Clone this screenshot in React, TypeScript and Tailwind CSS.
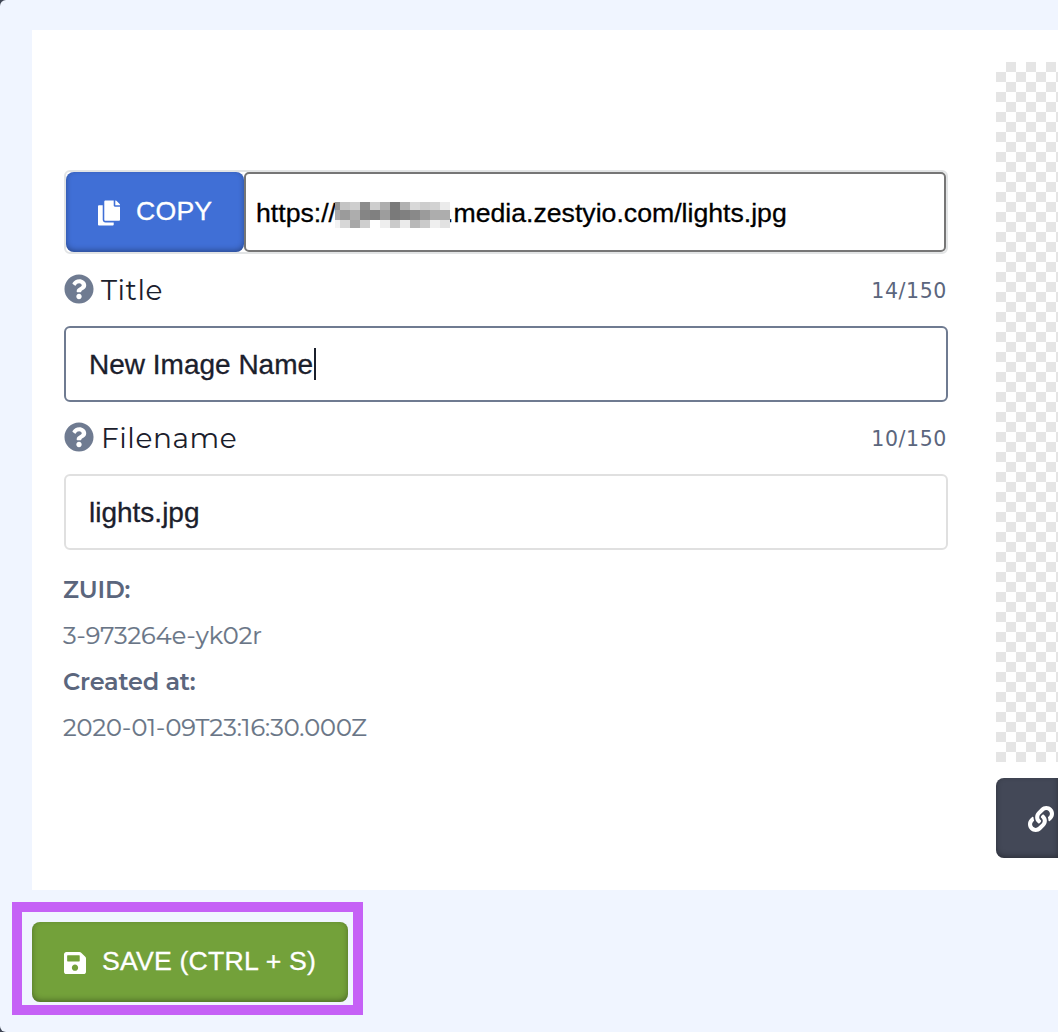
import type { ReactNode } from "react";
import { FaCopy, FaLink, FaQuestionCircle, FaSave } from "react-icons/fa";

const mosaic: string[][] = [
  ["#949494", "#c4c4c4", "#cecece", "#8c8c8c", "#cdcdcd", "#adadad", "#7a7a7a", "#b1b1b1", "#d8d8d8", "#cdcdcd", "#d2d2d2", "#ebebeb"],
  ["#aaaaaa", "#9b9b9b", "#adadad", "#858585", "#808080", "#9d9d9d", "#7a7a7a", "#808080", "#898989", "#9b9b9b", "#adadad", "#adadad"],
  ["#f3f3f3", "#d7d7d7", "#a7a7a7", "#cecece", "#ffffff", "#eeeeee", "#cacaca", "#ebebeb", "#b8b8b8", "#cacaca", "#efefef", "#e2e2e2"],
];

function RedactedHost() {
  return (
    <span className="z-10 -ml-px mt-[6px] grid h-[26px] w-[115px] shrink-0 grid-cols-[5px_repeat(11,10px)] grid-rows-[8px_10px_8px]">
      {mosaic.flat().map((color, i) => (
        <span key={i} style={{ backgroundColor: color }} />
      ))}
    </span>
  );
}

function FieldLabel({ children, count }: { children: ReactNode; count: string }) {
  return (
    <div className="flex h-[38px] items-center justify-between text-[#1b202c]">
      <div className="flex items-center">
        <FaQuestionCircle className="size-[30px] text-[#6f7b91]" />
        <span className="ml-[7px] mt-[2px] font-[Montserrat,Inter,sans-serif] text-[28px] leading-[38px] tracking-[0.55px]">{children}</span>
      </div>
      <span className="mr-px mt-[4px] font-['DejaVu_Sans',sans-serif] text-[20.5px] tracking-[0.6px] text-[#5b667d]">{count}</span>
    </div>
  );
}

export default function App() {
  return (
    <main className="h-[1032px] w-[1058px] overflow-hidden bg-[#3f4554] font-['Liberation_Sans',Arial,sans-serif]">
      <div className="h-full rounded-l-[6px] bg-[#f0f5ff] pt-[30px]">
        <section className="ml-8 flex h-[860px] bg-white">
          <div className="ml-8 w-[884px] shrink-0 pt-[140px]">
            <div className="flex h-[84px] rounded-[6px] border-2 border-[#e2e4e5]">
              <button className="flex h-20 w-[178px] shrink-0 items-center rounded-[8px] bg-[#406fd6] pl-8 text-white shadow-[inset_0_-2px_6px_-1px_rgba(0,0,0,0.4)]">
                <FaCopy className="mt-[1px] h-[26px] w-[22px]" />
                <span className="-mt-[3px] ml-4 text-[26.67px] tracking-[0.2px] [-webkit-text-stroke:0.3px]">COPY</span>
              </button>
              <div className="flex flex-1 items-center rounded-[5px] border-2 border-[#767676] pl-[10px] text-[26.67px] text-black">
                <span className="mt-px [-webkit-text-stroke:0.3px]">https://</span>
                <RedactedHost />
                <span className="-ml-1 mt-px [-webkit-text-stroke:0.3px]">.media.zestyio.com/lights.jpg</span>
              </div>
            </div>

            <div className="mt-4">
              <FieldLabel count="14/150">Title</FieldLabel>
              <div className="mt-[18px] flex h-[76px] items-center rounded-[6px] border-2 border-[#6f7b91] pl-[23px] text-[28px] text-[#1b202c]">
                <span className="mt-px [-webkit-text-stroke:0.3px]">New Image Name</span>
                <span className="ml-px h-8 w-0.5 bg-[#1b202c]" />
              </div>
            </div>

            <div className="mt-4">
              <FieldLabel count="10/150">Filename</FieldLabel>
              <div className="mt-[18px] flex h-[76px] items-center rounded-[6px] border-2 border-[#e0e0e0] pl-[23px] text-[28px] text-[#1b202c]">
                <span className="mt-px [-webkit-text-stroke:0.3px]">lights.jpg</span>
              </div>
            </div>

            <dl className="-ml-px mt-[17px] font-[Montserrat,Inter,sans-serif] text-[24px] leading-[46px] text-[#697586]">
              <dt className="font-semibold tracking-[-0.2px] text-[#5b667d]">ZUID:</dt>
              <dd className="[-webkit-text-stroke:0.2px]">3-973264e-yk02r</dd>
              <dt className="font-semibold tracking-[-0.2px] text-[#5b667d]">Created at:</dt>
              <dd className="[-webkit-text-stroke:0.2px]">2020-01-09T23:16:30.000Z</dd>
            </dl>
          </div>

          <div className="ml-12 mt-8 w-[62px] shrink-0">
            <div className="h-[700px] bg-[conic-gradient(#fff_25%,#e5e5e5_0_50%,#fff_0_75%,#e5e5e5_0)] bg-[length:20px_20px] bg-[position:10px_0]" />
            <button className="mt-4 flex h-20 w-[62px] items-center rounded-l-[8px] bg-[#434857] pl-8 text-white shadow-[inset_0_-2px_6px_-1px_rgba(0,0,0,0.4)]">
              <FaLink className="mt-[2px] size-[26px] shrink-0" />
            </button>
          </div>
        </section>

        <div className="ml-3 mt-3 h-[113px] w-[351px] border-10 border-[#c561f6] pl-[10px] pt-[10px]">
          <button className="flex h-20 w-[316px] items-center rounded-[8px] bg-[#73a13a] pl-8 text-white shadow-[inset_0_-2px_6px_-1px_rgba(0,0,0,0.4)]">
            <FaSave className="mt-[2px] h-[26px] w-[22px]" />
            <span className="-mt-[3px] ml-4 whitespace-nowrap text-[26.67px] tracking-[0.2px] [-webkit-text-stroke:0.3px]">SAVE (CTRL + S)</span>
          </button>
        </div>
      </div>
    </main>
  );
}
